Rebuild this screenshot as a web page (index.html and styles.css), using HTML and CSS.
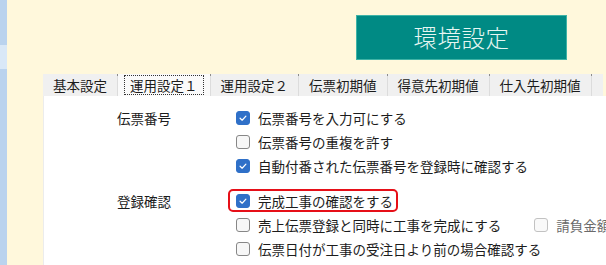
FILE: index.html
```html
<!DOCTYPE html>
<html lang="ja">
<head>
<meta charset="utf-8">
<link rel="stylesheet" href="styles.css">
</head>
<body>
<div class="app">
  <div class="strip"><div class="strip-hi"></div></div>
  <div class="main">
    <header class="top">
      <button class="env">環境設定</button>
    </header>
    <nav class="tabs">
      <div class="tab">基本設定</div>
      <div class="tab sel"><span class="focus">運用設定１</span></div>
      <div class="tab">運用設定２</div>
      <div class="tab">伝票初期値</div>
      <div class="tab">得意先初期値</div>
      <div class="tab">仕入先初期値</div>
    </nav>
    <section class="panel">
      <div class="group">
        <div class="glabel">伝票番号</div>
        <div class="opts">
          <label class="opt"><span class="cb on"><svg viewBox="0 0 14 14"><path d="M3.6 7.3 L6 9.6 L10.4 4.8" /></svg></span>伝票番号を入力可にする</label>
          <label class="opt"><span class="cb"></span>伝票番号の重複を許す</label>
          <label class="opt"><span class="cb on"><svg viewBox="0 0 14 14"><path d="M3.6 7.3 L6 9.6 L10.4 4.8" /></svg></span>自動付番された伝票番号を登録時に確認する</label>
        </div>
      </div>
      <div class="group">
        <div class="glabel">登録確認</div>
        <div class="opts">
          <div class="row"><label class="opt hl"><span class="cb on"><svg viewBox="0 0 14 14"><path d="M3.6 7.3 L6 9.6 L10.4 4.8" /></svg></span>完成工事の確認をする</label></div>
          <div class="row">
            <label class="opt"><span class="cb"></span>売上伝票登録と同時に工事を完成にする</label>
            <label class="opt dis"><span class="cb"></span>請負金額を</label>
          </div>
          <label class="opt"><span class="cb"></span>伝票日付が工事の受注日より前の場合確認する</label>
        </div>
      </div>
    </section>
  </div>
</div>
</body>
</html>
```

FILE: styles.css
```css
html, body {
  margin: 0;
  padding: 0;
  width: 606px;
  height: 265px;
  overflow: hidden;
  background: #fff8dc;
  font-family: "Noto Sans CJK JP", "Noto Sans", sans-serif;
  color: #1c1c1c;
}

.app {
  display: flex;
  height: 265px;
}

.strip {
  width: 7px;
  background: #bad3ee;
  display: flex;
  flex-direction: column;
  padding-top: 45px;
  box-sizing: border-box;
}

.strip-hi {
  height: 24px;
  background: #d9e8f7;
}

.main {
  flex: 1;
  display: flex;
  flex-direction: column;
  min-width: 0;
}

.top {
  height: 74px;
  box-sizing: border-box;
  padding: 15px 0 0 349px;
}

.env {
  width: 211px;
  height: 45px;
  margin: 0;
  padding: 0 0 2px 0;
  background: #008a84;
  border: 1px solid #3fb3a6;
  color: #e6f6f2;
  font-family: "Noto Sans CJK JP", sans-serif;
  font-size: 23.5px;
  font-weight: 300;
  letter-spacing: 0.5px;
  display: flex;
  align-items: center;
  justify-content: center;
}

.tabs {
  display: flex;
  height: 22px;
  margin: 0 3px 0 36px;
  background: #f0f0f0;
  font-size: 13.5px;
  line-height: 22px;
}

.tab {
  padding: 0 10px;
  border-right: 1px solid #dcdcdc;
  white-space: nowrap;
  position: relative;
}

.tab::before {
  content: "";
  position: absolute;
  right: -1px;
  top: 0;
  width: 1px;
  height: 2px;
  background: #8c8c8c;
}

.tab.sel {
  background: #fafafa;
  padding: 0 6px;
  display: flex;
  align-items: center;
}

.focus {
  border: 1px dotted #333;
  line-height: 18px;
  padding: 0 5px;
}

.panel {
  flex: 1;
  margin-left: 36px;
  background: #fff;
  border-left: 1px solid #ececec;
  padding: 10px 0 0 73px;
  overflow: hidden;
  white-space: nowrap;
  font-size: 13.5px;
  display: flex;
  flex-direction: column;
  gap: 11px;
}

.group {
  display: flex;
}

.glabel {
  width: 119px;
  flex: none;
  line-height: 24px;
}

.opts {
  display: flex;
  flex-direction: column;
}

.row {
  display: flex;
}

.opt {
  display: flex;
  align-items: center;
  height: 24px;
  position: relative;
}

.cb {
  width: 12px;
  height: 12px;
  border: 1px solid #878787;
  background: #f7f7f7;
  border-radius: 3px;
  margin-right: 8px;
  flex: none;
  display: flex;
}

.cb.on {
  background: #2f70c8;
  border-color: #2f70c8;
}

.cb svg {
  width: 12px;
  height: 12px;
}

.cb svg path {
  fill: none;
  stroke: #fff;
  stroke-width: 1.4;
  stroke-linecap: round;
  stroke-linejoin: round;
}

.hl::after {
  content: "";
  position: absolute;
  left: -8px;
  right: -5px;
  top: 0;
  bottom: 1px;
  border: 2.5px solid #e60f18;
  border-radius: 5px;
}

.dis {
  margin-left: 33px;
  color: #6a6a6a;
}

.dis .cb {
  border-color: #c2c2c2;
  background: #f9f9f9;
}
```
